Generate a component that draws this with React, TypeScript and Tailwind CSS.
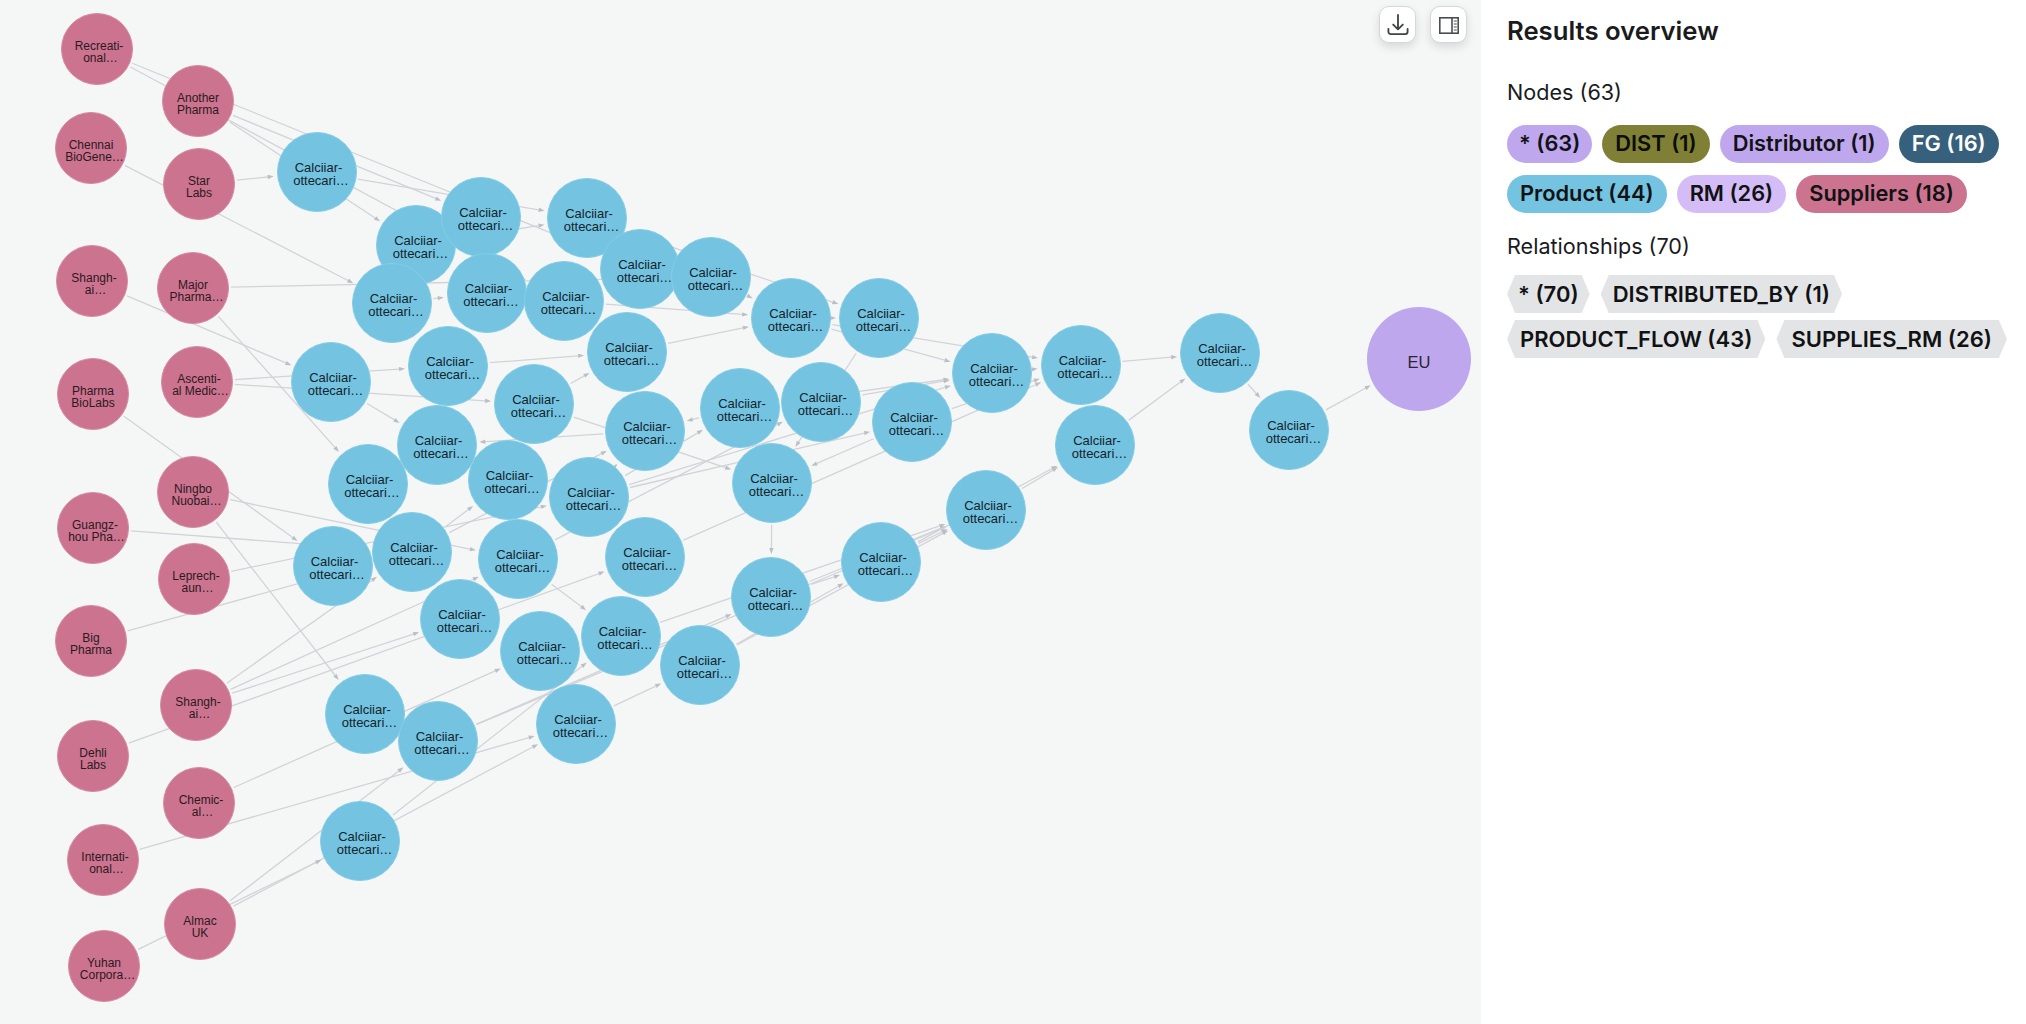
const N: Record<string, [number, number]> = {
  rec: [97, 49], ano: [198, 101], che: [91, 148], sta: [199, 184], sh1: [92, 281], maj: [193, 288],
  asc: [197, 382], pha: [93, 394], nin: [193, 492], gua: [93, 528], lep: [194, 579], big: [91, 641],
  sh2: [196, 705], deh: [93, 756], chm: [199, 803], int: [103, 860], alm: [200, 924], yuh: [104, 966],
  b1: [316.5, 172], b2: [416, 245], b3: [481, 217], b4: [587, 218], b5: [640, 269], b6: [391.5, 303],
  b7: [486.5, 293], b8: [564, 301], b9: [627, 352], b10: [448, 366], b11: [331, 382], b12: [534, 404],
  b13: [436.5, 445], b14: [645, 431], b15: [507.5, 480], b16: [367.5, 484], b17: [589, 497], b18: [332.5, 566],
  b19: [412, 552], b20: [518, 559], b21: [645, 557], b22: [460, 619], b23: [540, 651], b24: [620.5, 636],
  b25: [576, 724], b26: [365, 714], b27: [437.5, 741], b28: [360, 841],
  c710: [711, 277], c791: [791, 318], c879: [879, 318], c740: [740, 408], c821: [821, 402], c992: [992, 373],
  c1080: [1080.5, 365], c912: [912, 422], c771: [772, 483], c1095: [1095, 445], c1220: [1220, 353], c1288: [1289, 430],
  c986: [986, 510], c881: [881, 562], c771b: [771, 597], c700: [700, 665], eu: [1419, 359],
};

const pinkNodes: [string, string, string][] = [
  ["rec", "Recreati-", "onal…"], ["ano", "Another", "Pharma"], ["che", "Chennai", "BioGene…"], ["sta", "Star", "Labs"],
  ["sh1", "Shangh-", "ai…"], ["maj", "Major", "Pharma…"], ["asc", "Ascenti-", "al Medic…"], ["pha", "Pharma", "BioLabs"],
  ["nin", "Ningbo", "Nuobai…"], ["gua", "Guangz-", "hou Pha…"], ["lep", "Leprech-", "aun…"], ["big", "Big", "Pharma"],
  ["sh2", "Shangh-", "ai…"], ["deh", "Dehli", "Labs"], ["chm", "Chemic-", "al…"], ["int", "Internati-", "onal…"],
  ["alm", "Almac", "UK"], ["yuh", "Yuhan", "Corpora…"],
];

const drawOrder = [
  "b1", "b2", "b3", "b4", "b6", "b5", "b7", "b8", "c710", "c791", "c879", "b10", "b9", "b12", "b11", "b13", "b14", "b16",
  "b15", "b17", "b18", "b19", "b20", "b21", "b22", "b23", "b24", "b25", "b26", "b27", "b28", "c740", "c821", "c912",
  "c771", "c992", "c1080", "c1095", "c1220", "c1288", "c986", "c881", "c771b", "c700",
];

const edges: [string, string][] = [
  ["rec", "b5"], ["rec", "b8"], ["ano", "b3"], ["ano", "b2"], ["che", "b6"], ["sta", "b1"], ["sh1", "b11"], ["maj", "c710"],
  ["maj", "b16"], ["asc", "b10"], ["asc", "b12"], ["pha", "b18"], ["nin", "b20"], ["nin", "b26"], ["gua", "b19"], ["lep", "b17"],
  ["big", "b19"], ["sh2", "b19"], ["sh2", "b20"], ["sh2", "b22"], ["deh", "b21"], ["chm", "b23"], ["int", "b25"], ["alm", "b27"],
  ["alm", "b25"], ["yuh", "b28"],
  ["b1", "b4"], ["b2", "b4"], ["b6", "b7"], ["b7", "b8"], ["b10", "b9"], ["b12", "b9"], ["b12", "c771"],
  ["b14", "b13"], ["b11", "b13"], ["b19", "b15"], ["b28", "b24"], ["b4", "c879"], ["c710", "c791"], ["b8", "c791"], ["b9", "c791"],
  ["c791", "c879"], ["c791", "c992"], ["c791", "c1080"], ["c992", "c1080"], ["c912", "c1080"], ["c821", "c992"], ["c740", "c992"],
  ["b17", "c992"], ["b17", "c912"], ["b19", "b14"], ["b17", "b14"], ["b17", "c740"], ["c740", "b14"], ["b20", "c821"], ["b20", "b24"],
  ["c879", "c771"], ["c912", "c771"], ["b21", "c1080"], ["b24", "c986"], ["c771b", "c881"], ["b27", "c771b"], ["b25", "c700"],
  ["b27", "c986"], ["c700", "c881"], ["c881", "c986"], ["c771b", "c986"], ["c700", "c986"], ["c986", "c1095"], ["c881", "c1095"],
  ["c771", "c771b"], ["c1095", "c1220"], ["c1080", "c1220"], ["c1220", "c1288"], ["c1288", "eu"],
];

const radius = (k: string) => (k === "eu" ? 52 : /^(b|c)\d/.test(k) ? 40 : 36);

function Edge({ from, to }: { from: string; to: string }) {
  const [x1, y1] = N[from];
  const [x2, y2] = N[to];
  const len = Math.hypot(x2 - x1, y2 - y1);
  const ux = (x2 - x1) / len;
  const uy = (y2 - y1) / len;
  const sx = x1 + ux * (radius(from) + 2);
  const sy = y1 + uy * (radius(from) + 2);
  const ex = x2 - ux * (radius(to) + 3);
  const ey = y2 - uy * (radius(to) + 3);
  const bx = ex - ux * 6;
  const by = ey - uy * 6;
  const px = -uy * 2.2;
  const py = ux * 2.2;
  return (
    <g>
      <line x1={sx} y1={sy} x2={bx} y2={by} stroke="#d2d3d8" strokeWidth={1.3} />
      <polygon points={`${ex},${ey} ${bx + px},${by + py} ${bx - px},${by - py}`} fill="#bcbec5" />
    </g>
  );
}

function Line({ text, hy, el }: { text: string; hy: string; el: string }) {
  const cls = text.endsWith("…") ? el : text.endsWith("-") ? hy : "";
  return <span className={`whitespace-nowrap ${cls}`}>{text}</span>;
}

function Pink({ id, a, b }: { id: string; a: string; b: string }) {
  const [x, y] = N[id];
  return (
    <div
      className="absolute flex h-[72px] w-[72px] flex-col items-center justify-center rounded-full border border-[#d68aa3] bg-[#cc7390] pt-[5px] text-center font-['Liberation_Sans',sans-serif] text-[12px] leading-[12px] text-[#2b1a20]"
      style={{ left: x - 36, top: y - 36 }}
    >
      <Line text={a} hy="pl-[4px]" el="pl-[7px]" />
      <Line text={b} hy="pl-[4px]" el="pl-[7px]" />
    </div>
  );
}

function Blue({ id }: { id: string }) {
  const [x, y] = N[id];
  return (
    <div
      className="absolute flex h-[80px] w-[80px] flex-col items-center justify-center rounded-full border border-[#86cde6] bg-[#74c3e0] pt-[4px] text-center font-['Liberation_Sans',sans-serif] text-[13px] leading-[13.5px] text-[#13242c]"
      style={{ left: x - 40, top: y - 40 }}
    >
      <span className="whitespace-nowrap pl-[4px]">Calciiar-</span>
      <span className="whitespace-nowrap pl-[9px]">ottecari…</span>
    </div>
  );
}

function Pill({ label, className }: { label: string; className: string }) {
  return (
    <span className={`flex h-[38px] items-center rounded-full text-[21.8px] font-semibold leading-none ${className}`}>
      {label}
    </span>
  );
}

function Hex({ label, className }: { label: string; className: string }) {
  return (
    <span
      className={`flex h-[38px] items-center bg-[#e3e4e6] text-[22px] font-semibold leading-none text-[#111214] [clip-path:polygon(8px_0,calc(100%-8px)_0,100%_50%,calc(100%-8px)_100%,8px_100%,0_50%)] ${className}`}
    >
      {label}
    </span>
  );
}

export default function App() {
  return (
    <div className="flex h-[1024px] w-[2026px] overflow-hidden bg-white font-['Inter',sans-serif]">
      <div className="relative h-full w-[1481px] shrink-0 bg-[#f5f7f7]">
        <svg className="absolute left-0 top-0" width={1481} height={1024}>
          {edges.map(([a, b]) => (
            <Edge key={a + b} from={a} to={b} />
          ))}
        </svg>
        {pinkNodes.map(([id, a, b]) => (
          <Pink key={id} id={id} a={a} b={b} />
        ))}
        {drawOrder.map((id) => (
          <Blue key={id} id={id} />
        ))}
        <div
          className="absolute flex h-[104px] w-[104px] items-center justify-center rounded-full bg-[#bfa7ee] pt-[6px] font-['Liberation_Sans',sans-serif] text-[16.5px] text-[#2b2433]"
          style={{ left: N.eu[0] - 52, top: N.eu[1] - 52 }}
        >
          EU
        </div>
        <div className="absolute right-[14px] top-[6px] flex gap-[14px]">
          <button className="flex h-[37px] w-[37px] items-center justify-center rounded-[10px] border border-[#d5d7da] bg-white shadow-[0_4px_10px_rgba(0,0,0,0.12)]">
            <svg width="24" height="24" viewBox="0 0 25 24" fill="none" stroke="#3f4247" strokeWidth="1.9" strokeLinecap="round" strokeLinejoin="round">
              <path d="M12.500 1.500v15M7.500 11.500l5 5 5-5M2.500 16v3a2.500 2.500 0 0 0 2.500 2.500h15a2.500 2.500 0 0 0 2.500-2.500v-3" />
            </svg>
          </button>
          <button className="flex h-[37px] w-[37px] items-center justify-center rounded-[10px] border border-[#d5d7da] bg-white shadow-[0_4px_10px_rgba(0,0,0,0.12)]">
            <svg width="24" height="24" viewBox="0 0 24 24" fill="none" stroke="#4a4d52" strokeWidth="1.6">
              <rect x="2.800" y="4.800" width="18.400" height="15.400" />
              <path d="M15 4.800v15.400" />
              <path d="M16.800 8h3M16.800 11h3M16.800 14h3M16.800 17h3" strokeWidth="1.100" />
            </svg>
          </button>
        </div>
      </div>
      <div className="flex min-w-0 flex-1 flex-col pl-[26px]">
        <h2 className="mt-[16px] text-[25.7px] font-semibold leading-[30px] text-[#1a1b1d]">Results overview</h2>
        <p className="mt-[31px] text-[21.6px] leading-[30px] text-[#1a1b1d]">Nodes (63)</p>
        <div className="mt-[18px] flex flex-wrap gap-x-[10px] gap-y-[12px] pr-[8px]">
          <Pill label="* (63)" className="bg-[#bfa7ee] px-[12px] text-[#111214]" />
          <Pill label="DIST (1)" className="bg-[#7f7f36] px-[13px] text-[#0c0d05]" />
          <Pill label="Distributor (1)" className="bg-[#bfa7ee] px-[13px] text-[#111214]" />
          <Pill label="FG (16)" className="bg-[#36607b] px-[13px] text-white" />
          <Pill label="Product (44)" className="bg-[#74c3e0] px-[13px] text-[#111214]" />
          <Pill label="RM (26)" className="bg-[#d4bdf7] px-[13px] text-[#111214]" />
          <Pill label="Suppliers (18)" className="bg-[#cc7390] px-[13px] text-[#111214]" />
        </div>
        <p className="mt-[18px] text-[21.6px] leading-[30px] text-[#1a1b1d]">Relationships (70)</p>
        <div className="mt-[14px] flex flex-wrap gap-x-[11px] gap-y-[7px]">
          <Hex label="* (70)" className="px-[11px]" />
          <Hex label="DISTRIBUTED_BY (1)" className="px-[12px]" />
          <Hex label="PRODUCT_FLOW (43)" className="px-[13px]" />
          <Hex label="SUPPLIES_RM (26)" className="px-[15px]" />
        </div>
      </div>
    </div>
  );
}
